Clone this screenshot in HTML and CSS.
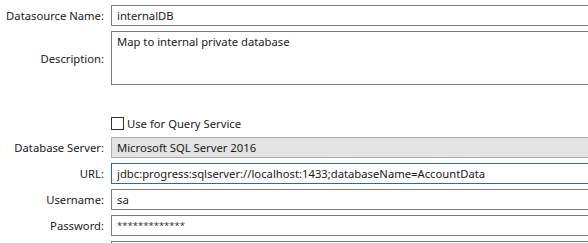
FILE: index.html
```html
<!DOCTYPE html>
<html lang="en">
<head>
  <meta charset="UTF-8">
  <meta name="viewport" content="width=device-width, initial-scale=1.0">
  <title>Datasource</title>
  <link rel="stylesheet" href="styles.css">
</head>
<body>
  <form class="ds-form">
    <label class="field-label" for="dsName">Datasource Name:</label>
    <input type="text" id="dsName" class="field" value="internalDB">

    <label class="field-label" for="dsDesc">Description:</label>
    <textarea id="dsDesc" class="field field-area">Map to internal private database</textarea>

    <div></div>
    <label class="check-row">
      <span class="check-box"></span>
      <span>Use for Query Service</span>
    </label>

    <label class="field-label" for="dbServer">Database Server:</label>
    <input type="text" id="dbServer" class="field field-readonly" value="Microsoft SQL Server 2016" readonly>

    <label class="field-label" for="dbUrl">URL:</label>
    <input type="text" id="dbUrl" class="field field-focus" value="jdbc:progress:sqlserver://localhost:1433;databaseName=AccountData">

    <label class="field-label" for="dbUser">Username:</label>
    <input type="text" id="dbUser" class="field" value="sa">

    <label class="field-label" for="dbPass">Password:</label>
    <input type="text" id="dbPass" class="field field-pass" value="*************">

    <div></div>
    <input type="text" class="field">
  </form>
</body>
</html>
```

FILE: styles.css
```css
body {
  margin: 0;
  background-color: #ffffff;
  font-family: "Noto Sans", "Open Sans", sans-serif;
  font-size: 11.25px;
  color: #1a1a1a;
  overflow: hidden;
}

.ds-form {
  display: grid;
  grid-template-columns: 104px 560px;
  column-gap: 7px;
  row-gap: 5px;
  padding-top: 5px;
}

.field-label {
  text-align: right;
  align-self: center;
  white-space: nowrap;
}

.field {
  box-sizing: border-box;
  width: 100%;
  height: 21px;
  margin: 0;
  padding: 0 5px;
  border: 1px solid #7a7a7a;
  background-color: #ffffff;
  font-family: inherit;
  font-size: 11.25px;
  color: #1a1a1a;
  outline: none;
}

.field-area {
  height: 54px;
  padding: 2px 5px;
  resize: none;
  overflow: hidden;
}

.field-readonly {
  background-color: #e3e3e3;
  border-color: #adadad;
}

.field-focus {
  border-color: #1f6fa8;
}

.field-pass {
  font-size: 9.5px;
  color: #333333;
}

.check-row {
  display: flex;
  align-items: center;
  gap: 3px;
  height: 18px;
  margin-top: 24px;
}

.check-box {
  box-sizing: border-box;
  width: 13px;
  height: 13px;
  border: 1px solid #333333;
  background-color: #ffffff;
}
```
